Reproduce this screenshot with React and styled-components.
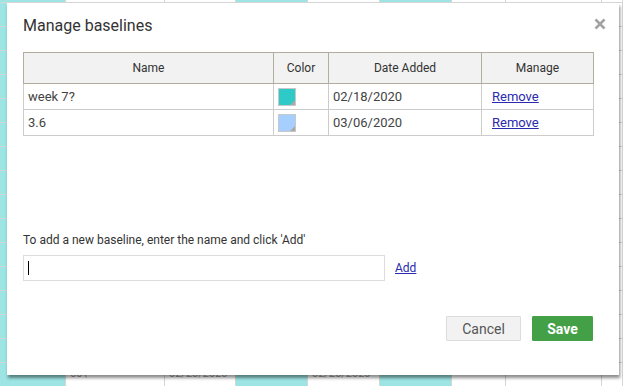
import React from 'react';
import styled, { createGlobalStyle } from 'styled-components';

const GlobalStyle = createGlobalStyle`
    html, body {
        margin: 0;
        padding: 0;
        width: 623px;
        height: 386px;
        overflow: hidden;
        background: #fff;
        font-family: Roboto, "Liberation Sans", Arial, sans-serif;
    }
`

const Page = styled.div`
    position: relative;
    width: 623px;
    height: 386px;
    overflow: hidden;
`

const Sheet = styled.div`
    display: flex;
    flex-direction: column;
    margin-top: -21px;
`

const SheetRow = styled.div`
    display: grid;
    grid-template-columns: 66px 99px 71px 72px 72px 72px 54px 96px 21px;
    height: 24px;
    border-bottom: 1px solid #d6d6d6;
    box-sizing: border-box;
`

const SheetCell = styled.div`
    background: ${p => (p.$teal ? '#9ce5e4' : '#fff')};
    border-right: 1px solid #d6d6d6;
    color: #999;
    font-size: 11px;
    line-height: 14px;
    padding: 4px 0 0 4px;
    overflow: hidden;
    white-space: nowrap;
`

const Dialog = styled.div`
    position: absolute;
    left: 7px;
    top: 3px;
    width: 612px;
    height: 372px;
    box-sizing: border-box;
    background: #fff;
    box-shadow: 1px 3px 3px rgba(0, 0, 0, 0.45);
    padding: 13px 26px 0 16px;
    display: flex;
    flex-direction: column;
`

const Title = styled.h2`
    margin: 0 0 16px;
    font-size: 16px;
    line-height: 20px;
    font-weight: 400;
    color: #333;
`

const Close = styled.button`
    position: absolute;
    right: 13px;
    top: 15px;
    border: 0;
    padding: 0;
    background: none;
    width: 12px;
    height: 12px;
    cursor: pointer;
`

const TableArea = styled.div`
    height: 180px;
`

const Table = styled.table`
    width: 570px;
    border-collapse: collapse;
    table-layout: fixed;
`

const Th = styled.th`
    background: #f2f2f2;
    border: 1px solid #b3ad9f;
    height: 30px;
    padding: 0;
    font-size: 12px;
    font-weight: 400;
    color: #333;
    text-align: center;
`

const Td = styled.td`
    border: 1px solid #cccccc;
    height: 25px;
    padding: 0 4px;
    font-size: 13px;
    color: #444;
    vertical-align: middle;
`

const Swatch = styled.span`
    position: relative;
    display: block;
    width: 18px;
    height: 18px;
    box-sizing: border-box;
    border: 1px solid #c8c8c8;
    background: ${p => p.$color};

    &::after {
        content: '';
        position: absolute;
        right: 0;
        bottom: 0;
        border-style: solid;
        border-width: 0 0 5px 5px;
        border-color: transparent transparent #a8a8a8 transparent;
    }
`

const LinkButton = styled.a`
    color: #2a2ab0;
    text-decoration: underline;
    font-size: ${p => p.$size || 12}px;
    cursor: pointer;
    margin-left: ${p => p.$indent || 0}px;
`

const Hint = styled.p`
    margin: 0 0 7px;
    font-size: 12px;
    line-height: 16px;
    color: #333;
`

const AddRow = styled.div`
    display: flex;
    align-items: center;
    gap: 10px;
`

const InputWrap = styled.div`
    position: relative;
`

const NameInput = styled.input`
    width: 362px;
    height: 26px;
    box-sizing: border-box;
    border: 1px solid #dcdcdc;
    padding: 0 4px;
    font-size: 13px;
    outline: none;
`

const Caret = styled.span`
    position: absolute;
    left: 5px;
    top: 6px;
    width: 1px;
    height: 14px;
    background: #000;
`

const Footer = styled.div`
    display: flex;
    justify-content: flex-end;
    gap: 11px;
    margin-top: 35px;
`

const Button = styled.button`
    height: 25px;
    padding: 0;
    width: ${p => p.$width}px;
    font-family: inherit;
    font-size: 14px;
    border-radius: 1px;
    cursor: pointer;
    border: 1px solid ${p => (p.$primary ? '#43a047' : '#dcdcdc')};
    background: ${p => (p.$primary ? '#43a047' : '#f2f2f2')};
    color: ${p => (p.$primary ? '#fff' : '#555')};
    font-weight: ${p => (p.$primary ? 700 : 400)};
`

const sheetRows = [
    ['', '100\\', '', '02/20/2020', '02/25/2020', '', '', '', ''],
    ...Array.from({ length: 15 }, () => ['', '', '', '', '', '', '', '', '']),
    ['', '60\\', '02/20/2020', '', '02/25/2020', '', '', '', '']
]

const tealCols = [0, 3, 5]

const baselines = [
    { name: 'week 7?', color: '#2ecac8', date: '02/18/2020' },
    { name: '3.6', color: '#a6cfff', date: '03/06/2020' }
]

export default class App extends React.Component {
    state = {
        name: ''
    }

    render() {
        return (
            <Page>
                <GlobalStyle />
                <Sheet>
                    {sheetRows.map((row, i) => (
                        <SheetRow key={i}>
                            {row.map((text, j) => (
                                <SheetCell key={j} $teal={tealCols.includes(j)}>{text}</SheetCell>
                            ))}
                        </SheetRow>
                    ))}
                </Sheet>
                <Dialog>
                    <Title>Manage baselines</Title>
                    <Close aria-label="Close">
                        <svg width="12" height="12" viewBox="0 0 12 12">
                            <path d="M1.5 1.5 L10.5 10.5 M10.5 1.5 L1.5 10.5" stroke="#a3a3a3" strokeWidth="2.6" />
                        </svg>
                    </Close>
                    <TableArea>
                        <Table>
                            <colgroup>
                                <col style={{ width: 250 }} />
                                <col style={{ width: 55 }} />
                                <col style={{ width: 153 }} />
                                <col style={{ width: 112 }} />
                            </colgroup>
                            <thead>
                                <tr>
                                    <Th>Name</Th>
                                    <Th>Color</Th>
                                    <Th>Date Added</Th>
                                    <Th>Manage</Th>
                                </tr>
                            </thead>
                            <tbody>
                                {baselines.map(b => (
                                    <tr key={b.name}>
                                        <Td>{b.name}</Td>
                                        <Td><Swatch $color={b.color} /></Td>
                                        <Td>{b.date}</Td>
                                        <Td><LinkButton $size={13} $indent={6}>Remove</LinkButton></Td>
                                    </tr>
                                ))}
                            </tbody>
                        </Table>
                    </TableArea>
                    <Hint>To add a new baseline, enter the name and click 'Add'</Hint>
                    <AddRow>
                        <InputWrap>
                            <NameInput value={this.state.name} onChange={e => this.setState({ name: e.target.value })} />
                            {this.state.name === '' && <Caret />}
                        </InputWrap>
                        <LinkButton>Add</LinkButton>
                    </AddRow>
                    <Footer>
                        <Button $width={75}>Cancel</Button>
                        <Button $primary $width={61}>Save</Button>
                    </Footer>
                </Dialog>
            </Page>
        )
    }
}
